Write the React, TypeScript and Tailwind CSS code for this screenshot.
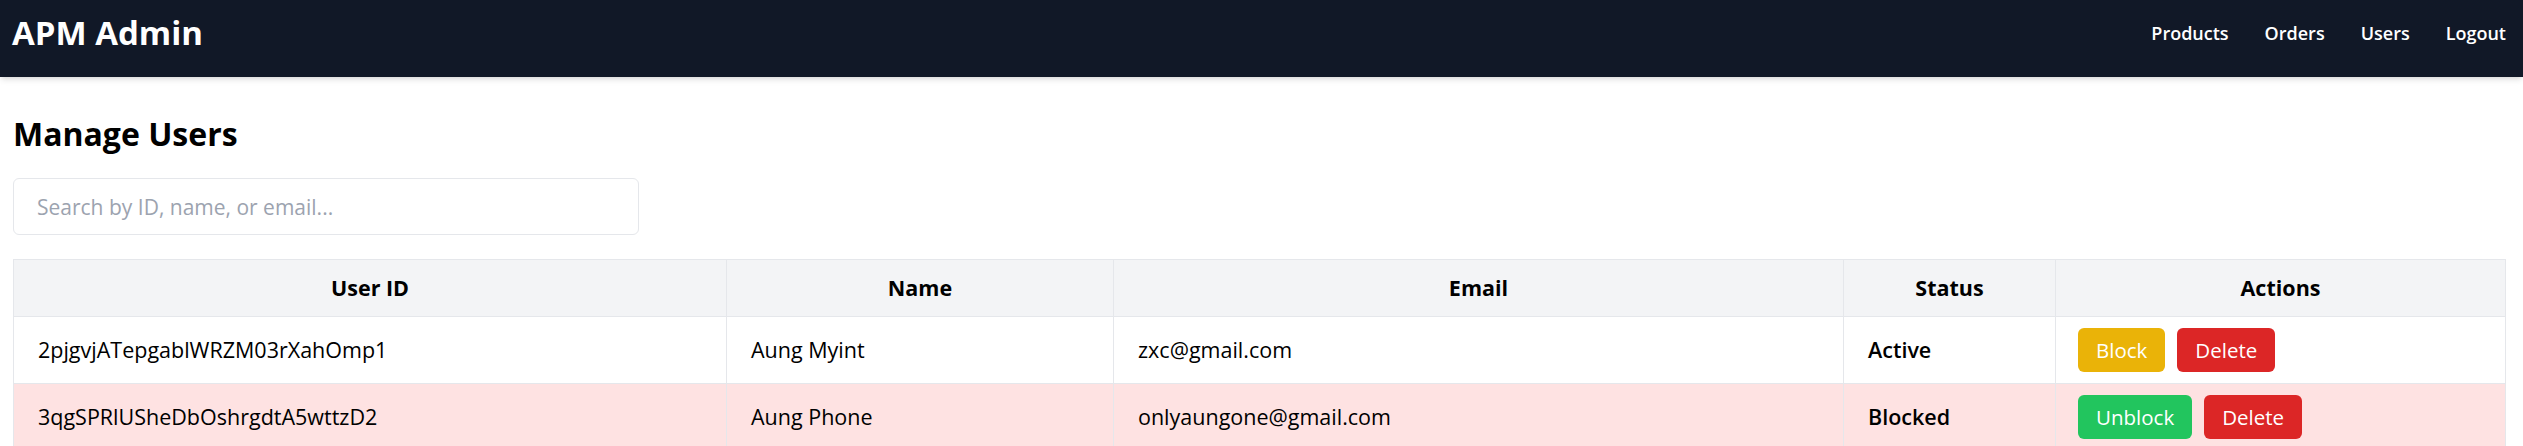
import React from 'react';

interface IUser {
  id: string;
  name: string;
  email: string;
  blocked: boolean;
}

const users: IUser[] = [
  {
    id: '2pjgvjATepgablWRZM03rXahOmp1',
    name: 'Aung Myint',
    email: 'zxc@gmail.com',
    blocked: false,
  },
  {
    id: '3qgSPRlUSheDbOshrgdtA5wttzD2',
    name: 'Aung Phone',
    email: 'onlyaungone@gmail.com',
    blocked: true,
  },
];

const navLinks = ['Products', 'Orders', 'Users', 'Logout'];

function Navbar() {
  return (
    <nav className="h-[77px] bg-[#111827] text-white flex justify-between items-center pl-[12px] pr-[17px] pb-[11px] shadow-md relative">
      <span className="text-[33px] leading-[48px] font-bold">APM Admin</span>
      <div className="flex items-center gap-[36px]">
        {navLinks.map((link) => (
          <a key={link} className="text-[18px] leading-[30px] font-semibold cursor-pointer">
            {link}
          </a>
        ))}
      </div>
    </nav>
  );
}

function UserRow({ user }: { user: IUser }) {
  return (
    <tr className={user.blocked ? 'bg-[#fee2e2]' : 'bg-white'}>
      <td className="border border-[#e5e7eb] px-[24px] py-[11px]">{user.id}</td>
      <td className="border border-[#e5e7eb] px-[24px] py-[11px]">{user.name}</td>
      <td className="border border-[#e5e7eb] px-[24px] py-[11px]">{user.email}</td>
      <td className="border border-[#e5e7eb] px-[24px] py-[11px] font-semibold">
        {user.blocked ? 'Blocked' : 'Active'}
      </td>
      <td className="border border-[#e5e7eb] px-[22px] py-[11px]">
        <div className="flex items-center gap-[12px] text-[20.5px]">
          {user.blocked ? (
            <button className="h-[44px] px-[18px] rounded-[6px] bg-[#22c55e] text-white">
              Unblock
            </button>
          ) : (
            <button className="h-[44px] px-[18px] rounded-[6px] bg-[#eab308] text-white">
              Block
            </button>
          )}
          <button className="h-[44px] px-[18px] rounded-[6px] bg-[#dc2626] text-white">
            Delete
          </button>
        </div>
      </td>
    </tr>
  );
}

export default function App() {
  return (
    <div className="min-h-screen bg-white text-black font-['Open_Sans',sans-serif]">
      <Navbar />
      <main className="pl-[13px] pr-[17px] pt-[33px]">
        <h1 className="text-[32px] leading-[48px] font-bold mb-[20px]">Manage Users</h1>
        <input
          type="text"
          placeholder="Search by ID, name, or email..."
          className="block w-[626px] h-[57px] border border-[#e5e7eb] rounded-[6px] px-[23px] text-[21px] placeholder:text-[#9ca3af] outline-none mb-[24px]"
        />
        <table className="w-full table-fixed border-collapse text-[21.5px] leading-[30px]">
          <colgroup>
            <col className="w-[713px]" />
            <col className="w-[387px]" />
            <col className="w-[730px]" />
            <col className="w-[212px]" />
            <col />
          </colgroup>
          <thead>
            <tr className="bg-[#f3f4f6]">
              {['User ID', 'Name', 'Email', 'Status', 'Actions'].map((h) => (
                <th key={h} className="border border-[#e5e7eb] py-[13px] font-bold text-center">
                  {h}
                </th>
              ))}
            </tr>
          </thead>
          <tbody>
            {users.map((u) => (
              <UserRow key={u.id} user={u} />
            ))}
          </tbody>
        </table>
      </main>
    </div>
  );
}
